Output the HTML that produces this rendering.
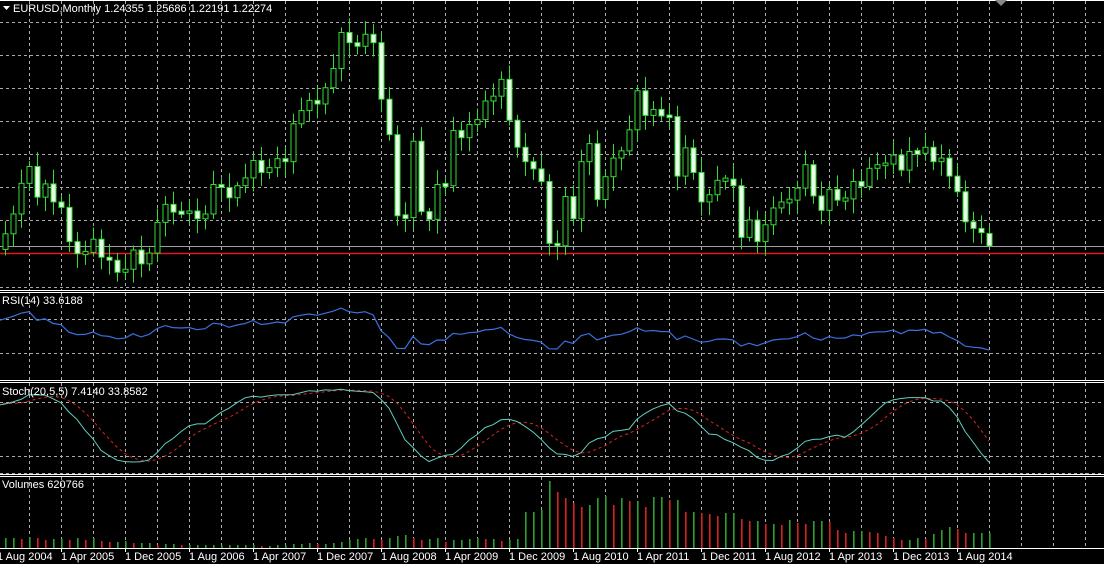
<!DOCTYPE html>
<html><head><meta charset="utf-8">
<style>
html,body{margin:0;padding:0;background:#000;width:1104px;height:564px;overflow:hidden}
svg{display:block}
text{font-family:"Liberation Sans",sans-serif;font-size:11px;fill:#fff}
</style></head><body>
<svg id="c" width="1104" height="564" viewBox="0 0 1104 564" xmlns="http://www.w3.org/2000/svg">
<rect width="1104" height="564" fill="#000"/>
<g id="grid"></g>
<g id="plots"></g>
<g id="frame">
<line x1="0" y1="0.5" x2="1104" y2="0.5" stroke="#fff"/>
<line x1="0" y1="290.5" x2="1104" y2="290.5" stroke="#fff"/>
<line x1="0" y1="292.5" x2="1104" y2="292.5" stroke="#fff"/>
<line x1="0" y1="380.5" x2="1104" y2="380.5" stroke="#fff"/>
<line x1="0" y1="382.5" x2="1104" y2="382.5" stroke="#fff"/>
<line x1="0" y1="474.5" x2="1104" y2="474.5" stroke="#fff"/>
<line x1="0" y1="476.5" x2="1104" y2="476.5" stroke="#fff"/>
<line x1="0" y1="548.5" x2="1104" y2="548.5" stroke="#fff"/>
<polygon points="995,0 1007,0 1001,6" fill="#888"/>
<polygon points="3,6 10,6 6.5,10" fill="#fff"/>
</g>
<text x="13" y="12">EURUSD,Monthly  1.24355 1.25686 1.22191 1.22274</text>
<text x="2" y="304">RSI(14) 33.6188</text>
<text x="2" y="395">Stoch(20,5,5) 7.4140 33.8582</text>
<text x="2" y="488">Volumes 620766</text>
<g id="labels"></g>
</svg>
<script>
var NS="http://www.w3.org/2000/svg";
function el(p,t,a){var e=document.createElementNS(NS,t);for(var k in a)e.setAttribute(k,a[k]);p.appendChild(e);return e;}
var grid=document.getElementById('grid'),plots=document.getElementById('plots'),labels=document.getElementById('labels');
var dash={stroke:"#aaa","stroke-width":1,"stroke-dasharray":"3,3"};
for(var x=29;x<1104;x+=32){
 [[1,290],[293,380],[383,474],[477,548]].forEach(function(r){var a=Object.assign({x1:x+.5,x2:x+.5,y1:r[0],y2:r[1]},dash);el(grid,'line',a);});
}
[22,55,88,121,154,187,220,287,319,353,402,456,473].forEach(function(y){el(grid,'line',Object.assign({x1:0,x2:1104,y1:y+.5,y2:y+.5},dash));});
var C=[0.8630,0.8700,0.8720,0.9010,0.9330,0.9920,0.9780,0.9820,0.9860,0.9880,0.9930,1.0490,
1.0730,1.0790,1.0910,1.1160,1.1800,1.1500,1.1240,1.0990,1.1650,1.1590,1.1990,1.2590,
1.2450,1.2130,1.2290,1.1970,1.2200,1.2170,1.2020,1.2170,1.2430,1.2760,1.3270,1.3550,
1.3040,1.3260,1.2960,1.2870,1.2300,1.2100,1.2120,1.2340,1.2040,1.1990,1.1790,1.1840,
1.2160,1.1930,1.2110,1.2620,1.2920,1.2790,1.2770,1.2810,1.2680,1.2760,1.3250,1.3200,
1.3030,1.3230,1.3360,1.3650,1.3450,1.3530,1.3680,1.3630,1.4260,1.4480,1.4650,1.4590,
1.4860,1.5180,1.5780,1.5610,1.5550,1.5750,1.5610,1.4670,1.4080,1.2730,1.2700,1.3970,
1.2800,1.2670,1.3250,1.3230,1.4150,1.4030,1.4250,1.4330,1.4640,1.4720,1.5000,1.4320,
1.3870,1.3630,1.3510,1.3300,1.2270,1.2230,1.3050,1.2680,1.3630,1.3930,1.3000,1.3380,
1.3690,1.3810,1.4160,1.4810,1.4400,1.4500,1.4390,1.4380,1.3390,1.3860,1.3450,1.2960,
1.3080,1.3320,1.3340,1.3230,1.2370,1.2660,1.2300,1.2580,1.2860,1.2960,1.2990,1.3190,
1.3580,1.3060,1.2820,1.3170,1.2990,1.3010,1.3300,1.3220,1.3520,1.3580,1.3590,1.3740,
1.3490,1.3800,1.3770,1.3870,1.3630,1.3690,1.3390,1.3130,1.2630,1.2520,1.2450,1.2227];
var n=C.length,O=[],H=[],L=[];
for(var i=0;i<n;i++){var o=i?C[i-1]:C[i];O.push(o);
 var w1=0.006+0.018*Math.abs(Math.sin(i*1.7)),w2=0.006+0.018*Math.abs(Math.cos(i*2.3));
 H.push(Math.max(o,C[i])+w1);L.push(Math.min(o,C[i])-w2);}
H[n-1]=1.25686;L[n-1]=1.22191;O[n-1]=1.24355;
var start=32;
function X(i){return 5+8*(i-start);}
function PY(p){return 246-(p-1.2227)*601;}
el(plots,'line',{x1:0,x2:1104,y1:246.5,y2:246.5,stroke:"#9aa0a8"});
el(plots,'line',{x1:0,x2:1104,y1:253.5,y2:253.5,stroke:"#e01818","stroke-width":1.5});
for(var i=start;i<n;i++){
 var x=X(i)+.5;
 el(plots,'line',{x1:x,x2:x,y1:PY(H[i]),y2:PY(L[i]),stroke:"#33dd33"});
 var t=Math.min(PY(O[i]),PY(C[i])),b=Math.max(PY(O[i]),PY(C[i]));if(b-t<2){t-=1;b+=1;}
 el(plots,'rect',{x:x-2.5,y:t,width:5,height:b-t,fill:C[i]<O[i]?"#eaffea":"#000",stroke:"#33dd33"});
}
var rsi=[],ag=0,al=0;
for(var i=1;i<=14;i++){var d=C[i]-C[i-1];if(d>0)ag+=d;else al-=d;}ag/=14;al/=14;
rsi[14]=100-100/(1+ag/al);
for(var i=15;i<n;i++){var d=C[i]-C[i-1];ag=(ag*13+Math.max(d,0))/14;al=(al*13+Math.max(-d,0))/14;rsi[i]=100-100/(1+ag/(al||1e-9));}
var pts=[];for(var i=start-1;i<n;i++)pts.push(X(i)+","+(378.5-0.85*rsi[i]).toFixed(1));
el(plots,'polyline',{points:pts.join(" "),fill:"none",stroke:"#3a70e0","stroke-width":1.2});
var K=[],D=[];
for(var i=0;i<n;i++){if(i<24)continue;var num=0,den=0;
 for(var j=i-4;j<=i;j++){var hh=-1e9,ll=1e9;for(var k=j-19;k<=j;k++){hh=Math.max(hh,H[k]);ll=Math.min(ll,L[k]);}num+=C[j]-ll;den+=hh-ll;}
 K[i]=100*num/den;}
for(var i=28;i<n;i++){var s=0;for(var j=i-4;j<=i;j++)s+=K[j];D[i]=s/5;}
function SY(v){return 474-0.9*v;}
var pk=[],pd=[];for(var i=start-1;i<n;i++){if(K[i]!=null)pk.push(X(i)+","+SY(K[i]).toFixed(1));if(D[i]!=null)pd.push(X(i)+","+SY(D[i]).toFixed(1));}
el(plots,'polyline',{points:pd.join(" "),fill:"none",stroke:"#e02020","stroke-dasharray":"3,3"});
el(plots,'polyline',{points:pk.join(" "),fill:"none",stroke:"#60d0c0"});
var V=[10,10,9,11,10,8,9,9,8,10,8,10,7,6,6,7,5,5,5,3,4,4,3,3,3,3,3,3,3,3,3,3,2,2,3,3,4,4,5,4,4,5,6,8,9,10,9,8,10,12,13,10,8,9,10,6,8,8,9,10,9,9,7,8,9,36,36,38,67,56,50,45,41,43,50,52,43,50,47,47,41,51,51,48,48,36,36,35,34,32,35,35,29,27,27,24,24,23,28,25,24,27,27,26,18,15,17,17,16,15,12,10,8,8,10,9,14,18,21,19,15];
while(V.length<n-start)V.push(15);
for(var i=0;i<n-start;i++){var x=X(i+start)+.5;var up=i==0||V[i]>=V[i-1];
 el(plots,'rect',{x:x-0.5,y:548-V[i],width:1.6,height:V[i],fill:up?"#2fa02f":"#d82020"});}
var lab=["1 Aug 2004","1 Apr 2005","1 Dec 2005","1 Aug 2006","1 Apr 2007","1 Dec 2007","1 Aug 2008","1 Apr 2009","1 Dec 2009","1 Aug 2010","1 Apr 2011","1 Dec 2011","1 Aug 2012","1 Apr 2013","1 Dec 2013","1 Aug 2014"];
for(var i=0;i<lab.length;i++){var x=-3+64*i;var t=el(labels,'text',{x:x,y:560});t.textContent=lab[i];
 el(labels,'line',{x1:x+.5,x2:x+.5,y1:548,y2:552,stroke:"#fff"});}
</script>
</body></html>
